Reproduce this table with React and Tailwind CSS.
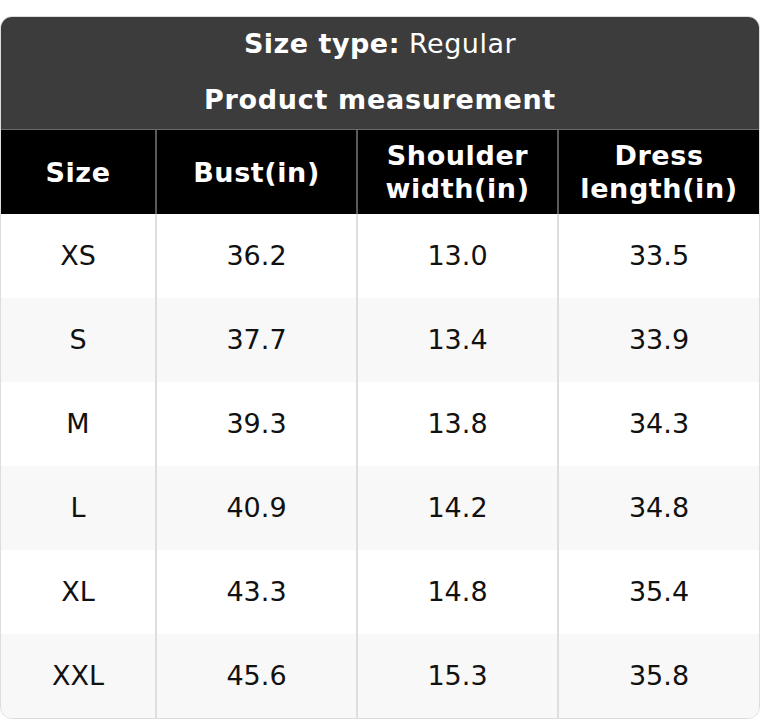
import React from "react";

const rows = [
  ["XS", "36.2", "13.0", "33.5"],
  ["S", "37.7", "13.4", "33.9"],
  ["M", "39.3", "13.8", "34.3"],
  ["L", "40.9", "14.2", "34.8"],
  ["XL", "43.3", "14.8", "35.4"],
  ["XXL", "45.6", "15.3", "35.8"],
];

const heads = [["Size"], ["Bust(in)"], ["Shoulder", "width(in)"], ["Dress", "length(in)"]];

export default function App() {
  return (
    <div className="min-h-screen bg-white pt-4 font-['DejaVu_Sans',sans-serif]">
      <div className="w-[760px] overflow-hidden rounded-xl border border-[#dcdcdc]">
        {/* title */}
        <div className="bg-[#3c3c3c] text-white text-[27px] tracking-[0.5px]">
          <div className="h-[54px] flex items-center justify-center">
            <span className="font-bold">Size type:</span>
            <span>&nbsp;Regular</span>
          </div>
          <div className="h-[58px] flex items-center justify-center font-bold tracking-[0.7px]">Product measurement</div>
        </div>

        {/* header row */}
        <div className="grid grid-cols-[154px_201px_201px_1fr] bg-black border-t border-[#6a6a6a] h-[85px] text-white font-bold text-[27px] leading-[33px] tracking-[0.6px]">
          {heads.map((h, i) => (
            <div
              key={i}
              className={"flex flex-col items-center justify-center text-center " + (i > 0 ? "border-l-2 border-[#5a5a5a]" : "")}
            >
              {h.map((t) => (
                <span key={t}>{t}</span>
              ))}
            </div>
          ))}
        </div>

        {/* body */}
        {rows.map((r, ri) => (
          <div
            key={ri}
            className={"grid grid-cols-[154px_201px_201px_1fr] h-[84px] text-[27px] text-[#111] " + (ri % 2 ? "bg-[#f8f8f8]" : "bg-white")}
          >
            {r.map((c, ci) => (
              <div
                key={ci}
                className={"flex items-center justify-center " + (ci > 0 ? "border-l-2 border-[#dedede]" : "")}
              >
                {c}
              </div>
            ))}
          </div>
        ))}
      </div>
    </div>
  );
}
